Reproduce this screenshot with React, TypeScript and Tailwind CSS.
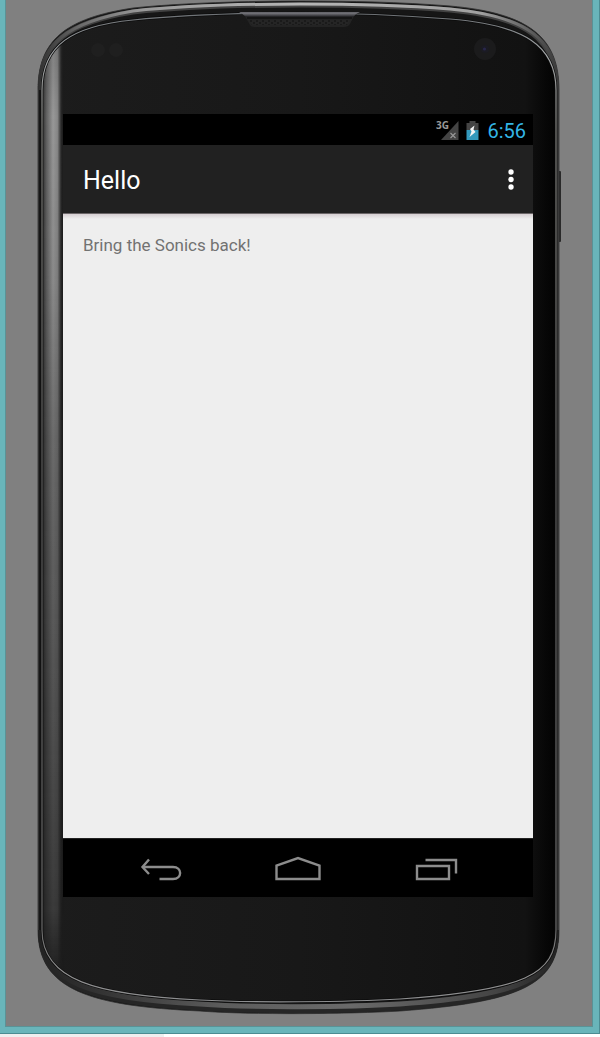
const OUTER =
  'M38 90 C38 40 66 18 133 8 C180 3 250 1 300 1 C350 1 400 2 450 6 C530 13 559 38 559 90 V930 C559 985 520 1002 400 1011 C350 1014 250 1015 200 1011 C90 1006 38 990 38 930 Z';
const FACE =
  'M42 90 C42 45 72 26 133 20 C180 15 250 13 300 13 C350 13 400 15 450 19 C525 25 556 46 556 90 V930 C556 975 525 990 400 999 C350 1002 250 1003 200 1000 C95 995 42 980 42 930 Z';

function PhoneShell() {
  return (
    <svg
      className="absolute inset-0 h-full w-full"
      viewBox="6 0 586 1026"
      preserveAspectRatio="none"
      fill="none"
      aria-hidden="true"
    >
      <defs>
        <linearGradient id="face" x1="42" x2="556" y1="0" y2="0" gradientUnits="userSpaceOnUse">
          <stop offset="0" stopColor="#1c1c1c" />
          <stop offset="0.5" stopColor="#181818" />
          <stop offset="0.94" stopColor="#121212" />
          <stop offset="0.98" stopColor="#070707" />
          <stop offset="1" stopColor="#030303" />
        </linearGradient>
        <linearGradient id="glare" x1="42" x2="64" y1="0" y2="0" gradientUnits="userSpaceOnUse">
          <stop offset="0" stopColor="#2a2a2a" />
          <stop offset="0.2" stopColor="#606060" />
          <stop offset="0.5" stopColor="#989898" />
          <stop offset="0.7" stopColor="#888" />
          <stop offset="0.86" stopColor="#2c2c2c" />
          <stop offset="1" stopColor="#1b1b1b" stopOpacity="0" />
        </linearGradient>
        <linearGradient id="fade" x1="0" x2="0" y1="40" y2="985" gradientUnits="userSpaceOnUse">
          <stop offset="0" stopColor="#fff" stopOpacity="0.8" />
          <stop offset="0.08" stopColor="#fff" />
          <stop offset="0.25" stopColor="#fff" stopOpacity="0.9" />
          <stop offset="0.42" stopColor="#fff" stopOpacity="0.65" />
          <stop offset="0.75" stopColor="#fff" stopOpacity="0.4" />
          <stop offset="0.92" stopColor="#fff" stopOpacity="0.25" />
          <stop offset="1" stopColor="#fff" stopOpacity="0" />
        </linearGradient>
        <mask id="glareMask" maskUnits="userSpaceOnUse" x="38" y="30" width="30" height="960" style={{ maskType: 'alpha' }}>
          <rect x="38" y="30" width="30" height="960" fill="url(#fade)" />
        </mask>
        <clipPath id="faceClip">
          <path d={FACE} />
        </clipPath>
        <clipPath id="outerClip">
          <path d={OUTER} />
        </clipPath>
        <linearGradient id="topBand" x1="38" x2="559" y1="0" y2="0" gradientUnits="userSpaceOnUse">
          <stop offset="0" stopColor="#303030" />
          <stop offset="0.08" stopColor="#6a6a6a" />
          <stop offset="0.2" stopColor="#999" />
          <stop offset="0.5" stopColor="#b5b5b5" />
          <stop offset="0.85" stopColor="#a0a0a0" />
          <stop offset="1" stopColor="#393939" />
        </linearGradient>
        <linearGradient id="lowBand" x1="38" x2="559" y1="0" y2="0" gradientUnits="userSpaceOnUse">
          <stop offset="0" stopColor="#222" />
          <stop offset="0.15" stopColor="#383838" />
          <stop offset="0.35" stopColor="#5c5c5c" />
          <stop offset="0.6" stopColor="#6a6a6a" />
          <stop offset="0.88" stopColor="#444" />
          <stop offset="1" stopColor="#222" />
        </linearGradient>
        <linearGradient id="edge" x1="0" x2="0" y1="13" y2="1002" gradientUnits="userSpaceOnUse">
          <stop offset="0" stopColor="#6c7074" />
          <stop offset="0.04" stopColor="#a4a7a9" />
          <stop offset="0.12" stopColor="#7c7c78" />
          <stop offset="0.5" stopColor="#5a5a5a" />
          <stop offset="0.93" stopColor="#6c6c6c" />
          <stop offset="0.97" stopColor="#909090" />
          <stop offset="1" stopColor="#8c8d8f" />
        </linearGradient>
        <linearGradient id="earpiece" x1="0" x2="0" y1="11" y2="17" gradientUnits="userSpaceOnUse">
          <stop offset="0" stopColor="#3c3c40" />
          <stop offset="0.35" stopColor="#77777d" />
          <stop offset="0.7" stopColor="#48484c" />
          <stop offset="1" stopColor="#18181a" />
        </linearGradient>
        <pattern id="mesh" x="250" y="20" width="6" height="4" patternUnits="userSpaceOnUse">
          <rect width="6" height="4" fill="#252525" />
          <circle cx="1" cy="1" r="0.8" fill="#0c0c0c" />
          <circle cx="4" cy="3" r="0.8" fill="#0c0c0c" />
        </pattern>
      </defs>

      <rect x="557" y="171" width="4" height="71" rx="1" fill="#292929" />
      <path d={OUTER} fill="#161616" stroke="#303030" strokeWidth="0.8" />
      <g clipPath="url(#outerClip)">
        <path
          d="M40 90 C40 43 68 22 133 12 C180 7 250 5 300 5 C350 5 400 6 450 10 C528 17 557 40 557 90"
          stroke="#424242"
          strokeWidth="5"
        />
        <path
          d="M39 90 C39 43 68 22 133 11 C180 6 250 4 300 4 C350 4 400 5 450 9 C528 16 558 40 558 90"
          stroke="url(#topBand)"
          strokeWidth="3"
        />
        <path
          d="M558 930 C558 981 522 997 400 1006 C350 1009 250 1010 200 1006 C92 1001 40 984 40 930"
          stroke="#262626"
          strokeWidth="9"
        />
        <path
          d="M558 930 C558 979 522 995 400 1004 C350 1007 250 1008 200 1004 C92 999 40 983 40 930"
          stroke="url(#lowBand)"
          strokeWidth="5"
        />
        <path d="M38.5 90 V930" stroke="#303030" />
        <path d="M558 90 V930" stroke="#393939" strokeWidth="2" />
      </g>
      <path d={FACE} fill="url(#face)" />
      <g clipPath="url(#faceClip)">
        <rect x="42" y="40" width="22" height="945" fill="url(#glare)" mask="url(#glareMask)" />
      </g>
      <path d={FACE} stroke="#0c0c0c" strokeWidth="2.6" />
      <path d={FACE} stroke="url(#edge)" strokeWidth="1.2" />

      <path d="M239 13 C243 13 244 15 246 18 L250 25 Q251 27 254 27 H344 Q348 27 350 24 L353 18 Q355 14 360 13 Z" fill="#232323" />
      <path d="M239 12 H360 Q355 14 353 17 H246 Q243 14 239 12 Z" fill="url(#earpiece)" />
      <path d="M247 18 H352" stroke="#080808" />
      <path d="M249 20 H350 L347 25 H252 Z" fill="url(#mesh)" />

      <circle cx="98" cy="50" r="7" fill="#1f1f1f" />
      <circle cx="116" cy="50" r="7" fill="#1f1f1f" />
      <circle cx="485" cy="49" r="11" fill="#1b1b1c" />
      <circle cx="485" cy="49" r="4" fill="#1b1b23" />
      <circle cx="484.5" cy="49" r="1.6" fill="#28264a" />
    </svg>
  );
}

function SignalIcon() {
  return (
    <svg width="25" height="29" viewBox="0 0 25 29" role="img" aria-label="3G signal">
      <path d="M23.5 5 V24 H6 Z" fill="#444" />
      <path d="M15.5 17 L20.5 22 M20.5 17 L15.5 22" stroke="#999" strokeWidth="1.1" />
      <text x="1" y="13" fill="#999" fontSize="10" className="font-['Open_Sans',sans-serif] font-bold">
        3G
      </text>
    </svg>
  );
}

function BatteryIcon() {
  return (
    <svg width="13" height="20" viewBox="0 0 13 20" role="img" aria-label="Battery charging">
      <path d="M3.5 0 H9.5 V2 H12.5 V9 H0.5 V2 H3.5 Z" fill="#444" />
      <path d="M0.5 9 H12.5 V19 H0.5 Z" fill="#3399bd" />
      <path d="M8.5 4.5 L4 8 L5.5 10.5 L3.5 16 L9.5 11 L7.5 8.5 Z" fill="#f4f4f4" />
    </svg>
  );
}

function Screen() {
  return (
    <main className="relative flex flex-col bg-[#eee]">
      <div className="flex h-[31px] items-center justify-end bg-black pt-0.5 pr-[7px]">
        <SignalIcon />
        <span className="ml-1.5 flex">
          <BatteryIcon />
        </span>
        <time className="ml-2 text-[20px] leading-6 text-[#33b5e5]">6:56</time>
      </div>

      <header className="flex h-[68px] items-center justify-between bg-[#212121] pt-0.5 pr-3 pl-5">
        <h1 className="pt-0.5 text-[25px] leading-8 font-normal text-white">Hello</h1>
        <button type="button" aria-label="More options" className="flex h-10 w-5 items-center justify-center">
          <svg width="6" height="22" viewBox="0 0 6 22" fill="#fff">
            <circle cx="3" cy="3" r="2.7" />
            <circle cx="3" cy="10.5" r="2.7" />
            <circle cx="3" cy="18" r="2.7" />
          </svg>
        </button>
      </header>

      <section className="min-h-[625px]">
        <div className="h-1.5 border-t border-[#6b6668] bg-linear-to-b from-[#d6cfd2] to-[#eee]" />
        <p className="px-5 pt-3.5 text-[17px] leading-6 text-[#727272]">Bring the Sonics back!</p>
      </section>

      <nav className="flex h-[59px] justify-center gap-[90px] border-t border-[#222] bg-black pt-4">
        <button type="button" aria-label="Back" className="h-7 w-12">
          <svg width="48" height="28" viewBox="0 0 48 28" fill="none" stroke="#8c8c8c" strokeWidth="2.4">
            <path d="M13 4.5 L6.5 12 L13 19" />
            <path d="M7 12 H37 C46.5 12 46.5 24 37 24 H23.5" />
          </svg>
        </button>
        <button type="button" aria-label="Home" className="h-7 w-12">
          <svg width="48" height="28" viewBox="0 0 48 28" fill="none" stroke="#8c8c8c" strokeWidth="2.4">
            <path d="M2.5 24 V10.5 L24 3 L45.5 10.5 V24 Z" />
          </svg>
        </button>
        <button type="button" aria-label="Recent apps" className="h-7 w-12">
          <svg width="48" height="28" viewBox="0 0 48 28" fill="none" stroke="#8c8c8c" strokeWidth="2.4">
            <path d="M5 11 H37 V24 H5 Z" />
            <path d="M13.5 5 H44 V18.5" />
          </svg>
        </button>
      </nav>
    </main>
  );
}

export default function App() {
  return (
    <div className="bg-white font-[Roboto,sans-serif]">
      <div className="border-r border-b border-[#4c8c92] bg-[#69b5ba] pr-1.5 pb-1.5 pl-[5px]">
        <div className="relative overflow-hidden border-x border-b border-[#5a9296] bg-[#808080] pt-[114px] pr-[59px] pb-[129px] pl-[57px]">
          <PhoneShell />
          <Screen />
        </div>
      </div>
      <div className="h-[3px] w-[164px] bg-[#efefef]" />
    </div>
  );
}
